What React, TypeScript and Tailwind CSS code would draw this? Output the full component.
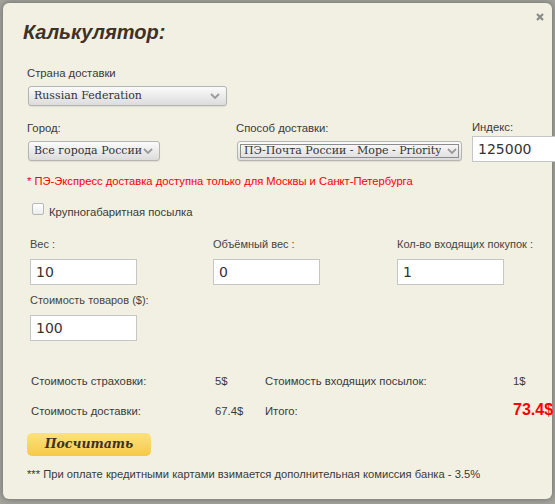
import React from "react";

const sans = "font-['Liberation_Sans',Arial,sans-serif]";
const serif = "font-['DejaVu_Serif',Georgia,serif]";

function Chevron() {
  return (
    <svg width="10" height="6" viewBox="0 0 10 6" className="shrink-0">
      <path d="M1 1 L5 5 L9 1" fill="none" stroke="#9a9a9a" strokeWidth="1.8" />
    </svg>
  );
}

function FakeSelect({
  value,
  width,
  focused,
}: {
  value: string;
  width: string;
  focused?: boolean;
}) {
  return (
    <div
      className={`${width} h-[20px] rounded-[3px] border border-[#b4b4b0] bg-gradient-to-b from-[#fbfbfb] to-[#dcdcdc] shadow-[0_1px_1px_rgba(0,0,0,0.08)] ${
        focused ? "p-[2px]" : ""
      }`}
    >
      <div
        className={`flex h-full items-center justify-between overflow-hidden ${
          focused ? "border border-[#8c8c8c] pl-[3px] pr-[1px]" : "pl-[5px] pr-[6px]"
        }`}
      >
        <span className={`${serif} truncate whitespace-nowrap text-[11px] leading-[14px] text-[#333]`}>
          {value}
        </span>
        <Chevron />
      </div>
    </div>
  );
}

function Field({ label, value }: { label: string; value: string }) {
  return (
    <div className="flex flex-col">
      <span className={`${sans} text-[11px] leading-[13px] text-[#444]`}>{label}</span>
      <div className="mt-[8px] flex h-[26px] w-[107px] items-center border border-[#c6c6c6] bg-white pl-[5px] font-['DejaVu_Sans',sans-serif] text-[14px] text-[#333]">
        {value}
      </div>
    </div>
  );
}

export default function App() {
  return (
    <div className="h-[504px] w-[555px] overflow-hidden bg-[#a3a29b] pl-[3px] pt-[3px]">
      <div className="relative flex h-[496px] w-[549px] flex-col rounded-[6px] bg-[#f2f0e2] pl-[24px] pt-[19px] shadow-[0_0_6px_rgba(0,0,0,0.35)]">
        {/* close */}
        <svg
          width="8"
          height="8"
          viewBox="0 0 8 8"
          className="absolute right-[8px] top-[10px]"
        >
          <path d="M1 1 L7 7 M7 1 L1 7" stroke="#8a8a8a" strokeWidth="2.2" />
        </svg>

        <h1 className={`${sans} -ml-[4px] text-[20px] font-bold italic leading-[20px] text-[#3d3128]`}>
          Калькулятор:
        </h1>

        <span className={`${sans} mt-[24px] text-[11.3px] leading-[14px] text-[#3a3a3a]`}>
          Страна доставки
        </span>
        <div className="mt-[6px] pl-[1px]">
          <FakeSelect value="Russian Federation" width="w-[199px]" />
        </div>

        {/* city / method / index */}
        <div className="mt-[15px] flex">
          <div className="flex w-[209px] shrink-0 flex-col">
            <span className={`${sans} text-[11.3px] leading-[14px] text-[#3a3a3a]`}>Город:</span>
            <div className="mt-[6px] pl-[1px]">
              <FakeSelect value="Все города России" width="w-[132px]" />
            </div>
          </div>
          <div className="flex w-[236px] shrink-0 flex-col">
            <span className={`${sans} text-[11.3px] leading-[14px] text-[#3a3a3a]`}>
              Способ доставки:
            </span>
            <div className="mt-[6px] pl-[1px]">
              <FakeSelect value="ПЭ-Почта России - Море - Priority" width="w-[225px]" focused />
            </div>
          </div>
          <div className="-mt-[1px] flex shrink-0 flex-col">
            <span className={`${sans} text-[11.3px] leading-[14px] text-[#3a3a3a]`}>Индекс:</span>
            <div className="mt-[2px] flex h-[26px] w-[100px] items-center border border-[#c6c6c6] bg-white pl-[5px] font-['DejaVu_Sans',sans-serif] text-[14px] text-[#333]">
              125000
            </div>
          </div>
        </div>

        <p className={`${sans} mt-[12px] text-[11.2px] leading-[14px] text-[#ff0000]`}>
          * ПЭ-Экспресс доставка доступна только для Москвы и Санкт-Петербурга
        </p>

        <label className="mt-[17px] flex items-start gap-[5px] pl-[5px]">
          <span className="-mt-[2px] h-[12px] w-[12px] rounded-[2px] border border-[#b8b8b8] bg-gradient-to-b from-white to-[#ececec]" />
          <span className={`${sans} text-[11.3px] leading-[14px] text-[#3a3a3a]`}>
            Крупногабаритная посылка
          </span>
        </label>

        {/* weights */}
        <div className="mt-[19px] flex pl-[3px]">
          <div className="w-[183px] shrink-0">
            <Field label="Вес :" value="10" />
          </div>
          <div className="w-[184px] shrink-0">
            <Field label="Объёмный вес :" value="0" />
          </div>
          <Field label="Кол-во входящих покупок :" value="1" />
        </div>
        <div className="mt-[9px] pl-[3px]">
          <Field label="Стоимость товаров ($):" value="100" />
        </div>

        {/* results */}
        <div
          className={`${sans} mt-[33px] grid grid-cols-[184px_50px_248px_auto] items-baseline gap-y-[15px] pl-[4px] text-[11.3px] leading-[14px] text-[#3a3a3a]`}
        >
          <span>Стоимость страховки:</span>
          <span>5$</span>
          <span>Стоимость входящих посылок:</span>
          <span>1$</span>
          <span>Стоимость доставки:</span>
          <span>67.4$</span>
          <span>Итого:</span>
          <span className="text-[16px] font-bold text-[#ff0000]">73.4$</span>
        </div>

        <button
          type="button"
          className={`${serif} mt-[15px] flex h-[23px] w-[124px] items-center justify-center rounded-[5px] bg-gradient-to-b from-[#fde27c] to-[#f6c944] text-[12.5px] font-bold italic text-[#3d3128]`}
        >
          Посчитать
        </button>

        <p className={`${sans} mt-[11px] text-[11.2px] leading-[14px] text-[#3a3a3a]`}>
          *** При оплате кредитными картами взимается дополнительная комиссия банка - 3.5%
        </p>
      </div>
    </div>
  );
}
